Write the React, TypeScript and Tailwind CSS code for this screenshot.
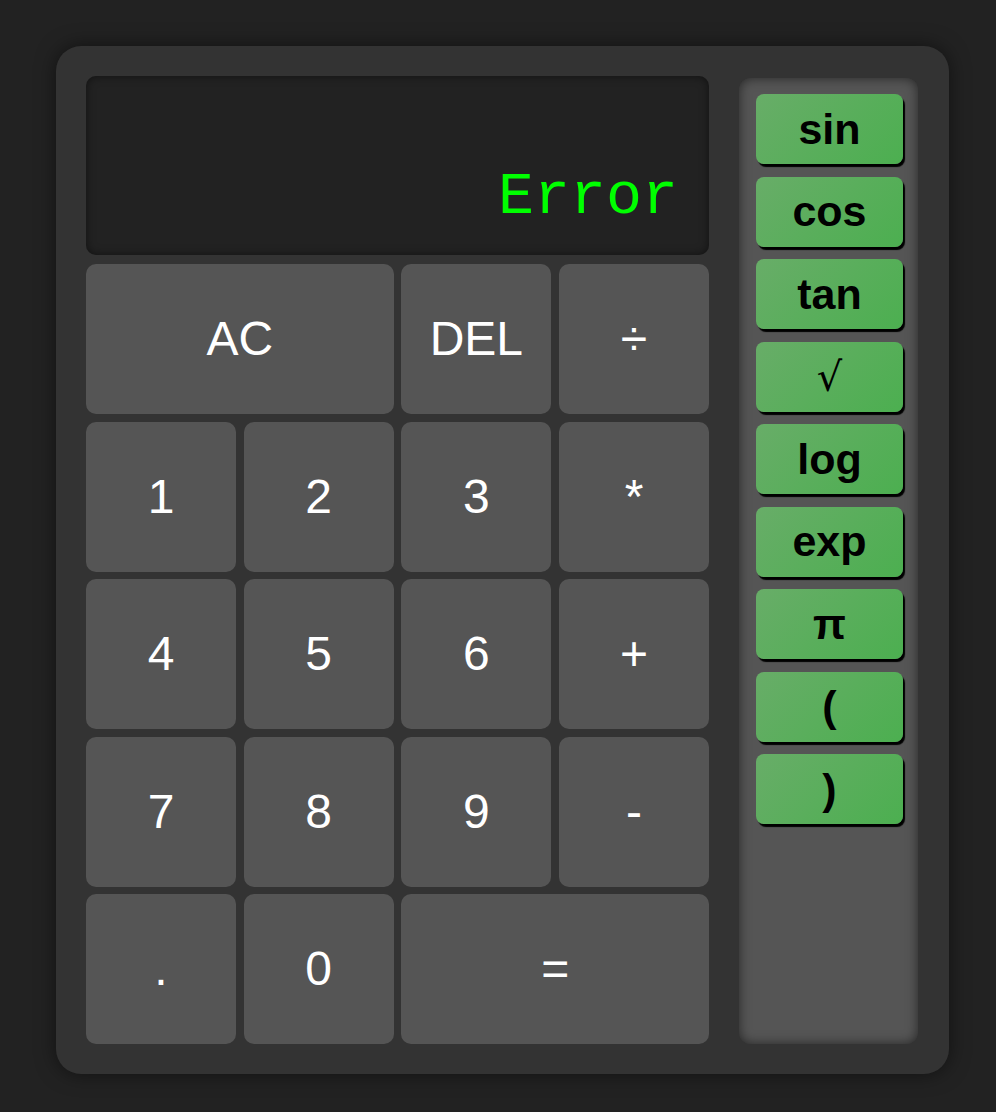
import React from 'react';

const KEYS = [
  { label: 'AC', span: true },
  { label: 'DEL' },
  { label: '÷' },
  { label: '1' },
  { label: '2' },
  { label: '3' },
  { label: '*' },
  { label: '4' },
  { label: '5' },
  { label: '6' },
  { label: '+' },
  { label: '7' },
  { label: '8' },
  { label: '9' },
  { label: '-' },
  { label: '.' },
  { label: '0' },
  { label: '=', span: true },
];

const FUNCS = ['sin', 'cos', 'tan', '√', 'log', 'exp', 'π', '(', ')'];

export default function App() {
  return (
    <div className="min-h-[1112px] bg-[#222] pt-[46px] pl-[56px] font-['Liberation_Sans',Arial,sans-serif]">
      <div className="w-[893px] h-[1028px] bg-[#333] rounded-[25px] shadow-[0_0_20px_rgba(0,0,0,0.5)] p-[30px] flex gap-[30px]">
        {/* left column: display + keypad */}
        <div className="w-[623px] flex flex-col gap-[9px]">
          <div className="h-[179px] bg-[#222] rounded-[10px] shadow-[inset_0_0_10px_rgba(0,0,0,0.5)] flex items-end justify-end pr-[31px] pb-[28px]">
            <span className="font-['Liberation_Mono','Courier_New',monospace] text-[60px] leading-none text-[#00ff00]">Error</span>
          </div>
          <div className="grid grid-cols-4 auto-rows-[150px] gap-x-[7.67px] gap-y-[7.5px]">
            {KEYS.map((k) => (
              <button
                key={k.label}
                className={`${k.span ? 'col-span-2' : ''} bg-[#555] rounded-[10px] text-white text-[48px] leading-none flex items-center justify-center`}
              >
                {k.label}
              </button>
            ))}
          </div>
        </div>

        {/* scientific functions */}
        <div className="w-[179px] mt-[2px] bg-[#555] rounded-[12px] shadow-[inset_0_0_12px_rgba(0,0,0,0.55)] pt-[16px] pl-[17px] pr-[15px] flex flex-col gap-[12.5px]">
          {FUNCS.map((f) => (
            <button
              key={f}
              className="h-[70px] rounded-[8px] bg-[linear-gradient(135deg,#68ad68,#4caf50)] shadow-[2px_3px_1px_#000] text-black font-bold text-[43px] leading-none flex items-center justify-center"
            >
              {f === '√' ? <span className="font-['DejaVu_Serif',serif] font-normal text-[40px]">√</span> : f}
            </button>
          ))}
        </div>
      </div>
    </div>
  );
}
